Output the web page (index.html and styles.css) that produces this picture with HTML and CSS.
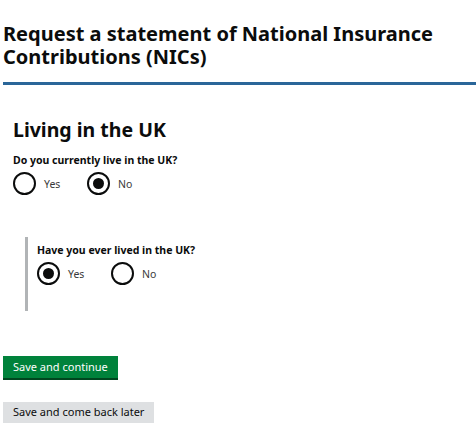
FILE: index.html
```html
<!DOCTYPE html>
<html lang="en">
<head>
<meta charset="utf-8">
<title>Request a statement of National Insurance Contributions</title>
<link rel="stylesheet" href="styles.css">
</head>
<body>
<header class="page-header">
  <h1 class="title">Request a statement of National Insurance Contributions (NICs)</h1>
</header>
<main class="content">
  <h2 class="section-title">Living in the UK</h2>
  <div class="question">
    <div class="question-label">Do you currently live in the UK?</div>
    <div class="radios">
      <label class="radio"><span class="radio-circle"></span><span class="radio-text">Yes</span></label>
      <label class="radio"><span class="radio-circle checked"></span><span class="radio-text">No</span></label>
    </div>
  </div>
  <div class="reveal">
    <div class="question">
      <div class="question-label">Have you ever lived in the UK?</div>
      <div class="radios">
        <label class="radio"><span class="radio-circle checked"></span><span class="radio-text">Yes</span></label>
        <label class="radio"><span class="radio-circle"></span><span class="radio-text">No</span></label>
      </div>
    </div>
  </div>
</main>
<div class="actions">
  <button class="btn btn-primary" type="button">Save and continue</button>
  <button class="btn btn-secondary" type="button">Save and come back later</button>
</div>
</body>
</html>
```
FILE: styles.css
```css
* { box-sizing: border-box; }
body {
  margin: 0;
  padding: 0 0 0 3px;
  background: #fff;
  color: #0b0c0c;
  font-family: "Noto Sans", "Open Sans", sans-serif;
}
.page-header {
  padding-top: 22px;
  border-bottom: 3px solid #2a6699;
  padding-bottom: 14px;
}
.title {
  margin: 0;
  font-size: 20px;
  line-height: 23px;
  font-weight: 700;
}
.content {
  padding-left: 10px;
}
.section-title {
  margin: 33px 0 0;
  font-size: 19.5px;
  line-height: 24px;
  font-weight: 700;
}
.question-label {
  margin-top: 12px;
  font-size: 10.5px;
  line-height: 13px;
  font-weight: 700;
}
.radios {
  display: flex;
  margin-top: 5px;
}
.radio {
  display: flex;
  align-items: center;
  gap: 8px;
  width: 74px;
}
.radio-circle {
  width: 23px;
  height: 23px;
  flex: none;
  border: 2px solid #0b0c0c;
  border-radius: 50%;
  display: flex;
  align-items: center;
  justify-content: center;
}
.radio-circle.checked::after {
  content: "";
  width: 11px;
  height: 11px;
  border-radius: 50%;
  background: #0b0c0c;
}
.radio-text {
  font-size: 10.5px;
  color: #3a3a3a;
}
.reveal {
  margin: 42px 0 0 12px;
  border-left: 3px solid #b1b4b6;
  padding: 7px 0 26px 9px;
}
.reveal .question-label {
  margin-top: 0;
}
.actions {
  display: flex;
  flex-direction: column;
  align-items: flex-start;
  gap: 24px;
  margin-top: 45px;
}
.btn {
  border: 0;
  font-family: inherit;
  font-size: 11px;
  line-height: 14px;
  padding: 4px 10px;
  height: 22px;
  cursor: pointer;
}
.btn-primary {
  background: #00823b;
  color: #fff;
  box-shadow: 0 2px 0 #00461f;
}
.btn-secondary {
  height: 21px;
  padding: 3px 10px 4px;
  background: #dee0e2;
  color: #0b0c0c;
  box-shadow: 0 2px 0 #bfc1c3;
}
```
